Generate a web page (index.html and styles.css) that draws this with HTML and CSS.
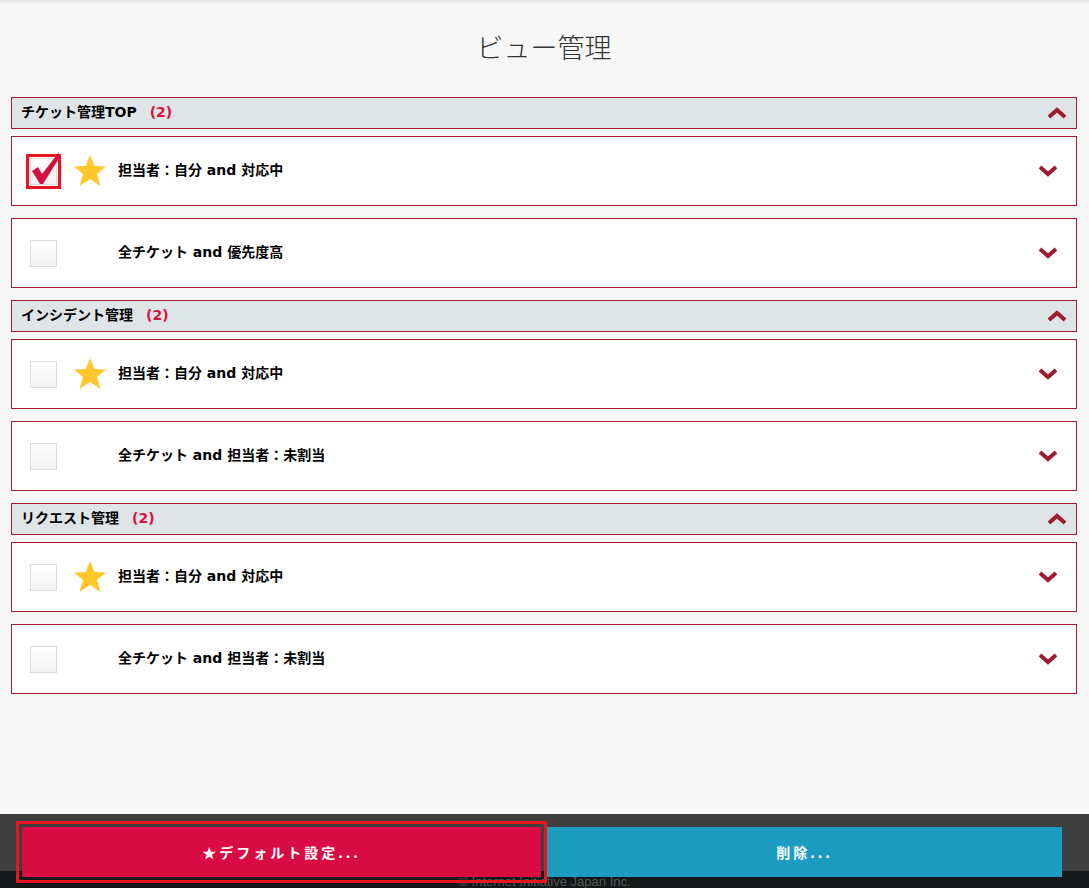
FILE: index.html
```html
<!DOCTYPE html>
<html lang="ja">
<head>
    <meta charset="UTF-8">
    <meta name="viewport" content="width=device-width, initial-scale=1.0">
    <title>ビュー管理</title>
    <link rel="stylesheet" href="styles.css">
</head>
<body>
    <div class="page">
        <div class="top-shade"></div>
        <main class="content">
            <h1>ビュー管理</h1>

            <section class="group">
                <div class="group-head">
                    <span class="group-name">チケット管理TOP</span><span class="count">(2)</span>
                    <svg class="chev up" viewBox="0 0 20 12"><polyline points="2,10 10,3 18,10"/></svg>
                </div>
                <div class="view-row">
                    <span class="check checked">
                        <svg class="tick" viewBox="0 -8 30 36"><polygon points="1,12 7,8 11,15 28,-7 27,1 12,25 9,25"/></svg>
                    </span>
                    <span class="star-slot"><svg class="star" viewBox="0 0 34 34"><polygon points="17,1 21.5,12 33,12.5 24,20 27.5,32 17,25 6.5,32 10,20 1,12.5 12.5,12"/></svg></span>
                    <span class="view-name">担当者：自分 and 対応中</span>
                    <svg class="chev down" viewBox="0 0 20 12"><polyline points="2,2 10,9 18,2"/></svg>
                </div>
                <div class="view-row">
                    <span class="check"></span>
                    <span class="star-slot"></span>
                    <span class="view-name">全チケット and 優先度高</span>
                    <svg class="chev down" viewBox="0 0 20 12"><polyline points="2,2 10,9 18,2"/></svg>
                </div>
            </section>

            <section class="group">
                <div class="group-head">
                    <span class="group-name">インシデント管理</span><span class="count">(2)</span>
                    <svg class="chev up" viewBox="0 0 20 12"><polyline points="2,10 10,3 18,10"/></svg>
                </div>
                <div class="view-row">
                    <span class="check"></span>
                    <span class="star-slot"><svg class="star" viewBox="0 0 34 34"><polygon points="17,1 21.5,12 33,12.5 24,20 27.5,32 17,25 6.5,32 10,20 1,12.5 12.5,12"/></svg></span>
                    <span class="view-name">担当者：自分 and 対応中</span>
                    <svg class="chev down" viewBox="0 0 20 12"><polyline points="2,2 10,9 18,2"/></svg>
                </div>
                <div class="view-row">
                    <span class="check"></span>
                    <span class="star-slot"></span>
                    <span class="view-name">全チケット and 担当者：未割当</span>
                    <svg class="chev down" viewBox="0 0 20 12"><polyline points="2,2 10,9 18,2"/></svg>
                </div>
            </section>

            <section class="group">
                <div class="group-head">
                    <span class="group-name">リクエスト管理</span><span class="count">(2)</span>
                    <svg class="chev up" viewBox="0 0 20 12"><polyline points="2,10 10,3 18,10"/></svg>
                </div>
                <div class="view-row">
                    <span class="check"></span>
                    <span class="star-slot"><svg class="star" viewBox="0 0 34 34"><polygon points="17,1 21.5,12 33,12.5 24,20 27.5,32 17,25 6.5,32 10,20 1,12.5 12.5,12"/></svg></span>
                    <span class="view-name">担当者：自分 and 対応中</span>
                    <svg class="chev down" viewBox="0 0 20 12"><polyline points="2,2 10,9 18,2"/></svg>
                </div>
                <div class="view-row">
                    <span class="check"></span>
                    <span class="star-slot"></span>
                    <span class="view-name">全チケット and 担当者：未割当</span>
                    <svg class="chev down" viewBox="0 0 20 12"><polyline points="2,2 10,9 18,2"/></svg>
                </div>
            </section>
        </main>

        <footer class="footer">
            <div class="footer-bar"></div>
            <div class="copyright">© Internet Initiative Japan Inc.</div>
            <div class="actions">
                <button class="btn btn-default">★デフォルト設定...</button>
                <button class="btn btn-delete">削除...</button>
            </div>
        </footer>
    </div>
</body>
</html>
```

FILE: styles.css
```css
body {
    margin: 0;
    background: #f7f7f7;
    font-family: "DejaVu Sans", "Noto Sans CJK JP", sans-serif;
    color: #000;
}
.page {
    min-height: 100vh;
    display: flex;
    flex-direction: column;
}
.top-shade {
    height: 4px;
    background: linear-gradient(#e6e6e6, #f7f7f7);
}
.content {
    padding: 0 12px 0 11px;
    flex: 1;
}
h1 {
    margin: 0;
    padding: 23px 0 30px;
    height: 40px;
    line-height: 40px;
    text-align: center;
    font-family: "Noto Sans CJK JP", sans-serif;
    font-size: 27px;
    font-weight: 300;
    color: #333;
}
.group-head {
    height: 30px;
    display: flex;
    align-items: center;
    padding: 0 9px;
    background: #dfe4e7;
    border: 1px solid #a41c34;
    margin-bottom: 7px;
    font-size: 14px;
    font-weight: bold;
    line-height: 1;
}
.group-name {
    flex: none;
    position: relative;
    top: -1px;
}
.count {
    color: #d7123f;
    margin-left: 13px;
    position: relative;
    top: -1px;
}
.view-row {
    height: 68px;
    display: flex;
    align-items: center;
    padding: 0 18px;
    background: #fff;
    border: 1px solid #a41c34;
    margin-bottom: 12px;
}
.check {
    position: relative;
    width: 25px;
    height: 25px;
    border: 1px solid #dcdcdc;
    background: linear-gradient(#fff, #f2f2f2);
    flex: none;
}
.check.checked {
    outline: 3px solid #e8141f;
    outline-offset: 1px;
}
.tick {
    position: absolute;
    left: 0;
    top: -8px;
    width: 30px;
    height: 36px;
    overflow: visible;
    fill: #d0103f;
}
.star-slot {
    width: 34px;
    height: 34px;
    margin-left: 16px;
    margin-right: 11px;
    flex: none;
}
.star {
    width: 34px;
    height: 34px;
    fill: #fec72b;
}
.view-name {
    font-size: 14px;
    font-weight: bold;
    line-height: 1;
    flex: 1;
    position: relative;
    top: -1px;
}
.chev {
    width: 20px;
    height: 12px;
    flex: none;
    margin-left: auto;
}
.chev polyline {
    fill: none;
    stroke: #9e1b32;
    stroke-width: 4;
}
.footer {
    position: relative;
    height: 74px;
}
.footer-bar {
    height: 57px;
    background: #3f3f3f;
}
.copyright {
    height: 17px;
    background: #141819;
    color: #555;
    font-family: "Liberation Sans", sans-serif;
    font-size: 13px;
    line-height: 22px;
    text-align: center;
    overflow: hidden;
}
.actions {
    position: absolute;
    left: 22px;
    right: 27px;
    top: 13px;
    display: flex;
    gap: 6px;
}
.btn {
    height: 50px;
    border: none;
    color: #fff;
    font-family: "Noto Sans CJK JP", sans-serif;
    font-size: 14px;
    font-weight: bold;
    letter-spacing: 3px;
    cursor: pointer;
}
.btn-default {
    width: 519px;
    background: #d90b43;
    outline: 3px solid #e8141f;
    outline-offset: 3px;
}
.btn-delete {
    flex: 1;
    background: #1c9cc0;
}
```
